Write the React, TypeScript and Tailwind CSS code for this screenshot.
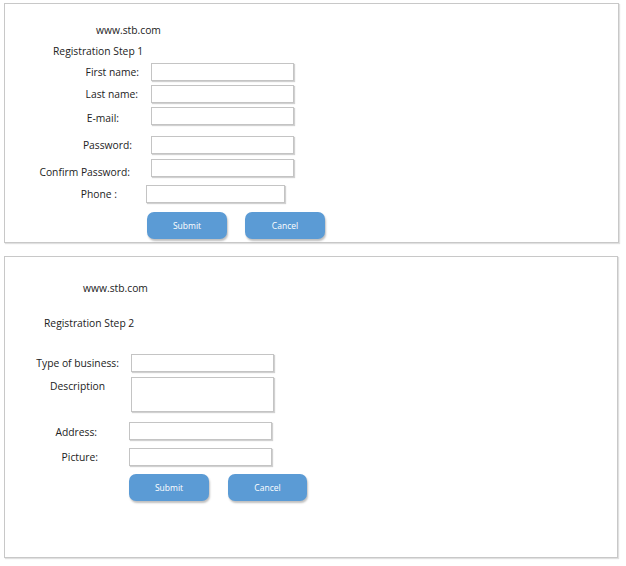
import React from "react";

const font = { fontFamily: '"Open Sans", "Noto Sans", Arial, sans-serif' };

function Btn({ children, className }: { children: React.ReactNode; className: string }) {
  return (
    <div
      className={
        "h-[27px] rounded-[7px] bg-[#5b9bd5] text-white text-[8.5px] flex items-center justify-center shadow-[1px_2px_2px_rgba(0,0,0,0.25)] " +
        className
      }
    >
      {children}
    </div>
  );
}

function Input({ className }: { className: string }) {
  return (
    <div
      className={
        "bg-white border border-[#c4c4c4] shadow-[1px_1px_1px_rgba(0,0,0,0.18)] shrink-0 " + className
      }
    />
  );
}

export default function App() {
  return (
    <div className="w-[626px] h-[566px] bg-white text-[#222222] text-[10.3px] leading-[14px]" style={font}>
      <div className="pt-[3px] pl-[4px]">
        {/* Panel 1 */}
        <div className="w-[615px] h-[240px] border border-[#c8c8c8] shadow-[1px_1px_1px_rgba(0,0,0,0.12)] flex flex-col">
          <div className="mt-[19px] ml-[91px]">www.stb.com</div>
          <div className="mt-[7px] ml-[48px]">Registration Step 1</div>

          <div className="mt-[5px] flex items-center h-[18px]">
            <div className="w-[134px] text-right">First name:</div>
            <Input className="ml-[12px] w-[143px] h-[18px]" />
          </div>
          <div className="mt-[4px] flex items-center h-[18px]">
            <div className="w-[133px] text-right">Last name:</div>
            <Input className="ml-[13px] w-[143px] h-[18px]" />
          </div>
          <div className="mt-[4px] flex items-center h-[18px]">
            <div className="w-[114px] text-right translate-y-[2px]">E-mail:</div>
            <Input className="ml-[32px] w-[143px] h-[18px]" />
          </div>
          <div className="mt-[11px] flex items-center h-[18px]">
            <div className="w-[127px] text-right">Password:</div>
            <Input className="ml-[19px] w-[143px] h-[18px]" />
          </div>
          <div className="mt-[5px] flex items-center h-[18px]">
            <div className="w-[125px] text-right translate-y-[4px]">Confirm Password:</div>
            <Input className="ml-[21px] w-[143px] h-[18px]" />
          </div>
          <div className="mt-[8px] flex items-center h-[18px]">
            <div className="w-[112px] text-right">Phone :</div>
            <Input className="ml-[29px] w-[139px] h-[18px]" />
          </div>
          <div className="mt-[9px] flex">
            <Btn className="ml-[142px] w-[80px]">Submit</Btn>
            <Btn className="ml-[18px] w-[80px]">Cancel</Btn>
          </div>
        </div>

        {/* Panel 2 */}
        <div className="mt-[13px] w-[614px] h-[302px] border border-[#c8c8c8] shadow-[1px_1px_1px_rgba(0,0,0,0.12)] flex flex-col">
          <div className="mt-[24px] ml-[78px]">www.stb.com</div>
          <div className="mt-[21px] ml-[39px]">Registration Step 2</div>

          <div className="mt-[24px] flex items-center h-[18px]">
            <div className="w-[114px] text-right">Type of business:</div>
            <Input className="ml-[12px] w-[143px] h-[18px]" />
          </div>
          <div className="mt-[5px] flex items-start h-[35px]">
            <div className="w-[100px] text-right pt-[2px]">Description</div>
            <Input className="ml-[26px] w-[143px] h-[35px]" />
          </div>
          <div className="mt-[10px] flex items-center h-[18px]">
            <div className="w-[92px] text-right translate-y-[1px]">Address:</div>
            <Input className="ml-[32px] w-[143px] h-[18px]" />
          </div>
          <div className="mt-[8px] flex items-center h-[18px]">
            <div className="w-[93px] text-right">Picture:</div>
            <Input className="ml-[31px] w-[143px] h-[18px]" />
          </div>
          <div className="mt-[8px] flex">
            <Btn className="ml-[124px] w-[80px]">Submit</Btn>
            <Btn className="ml-[19px] w-[79px]">Cancel</Btn>
          </div>
        </div>
      </div>
    </div>
  );
}
